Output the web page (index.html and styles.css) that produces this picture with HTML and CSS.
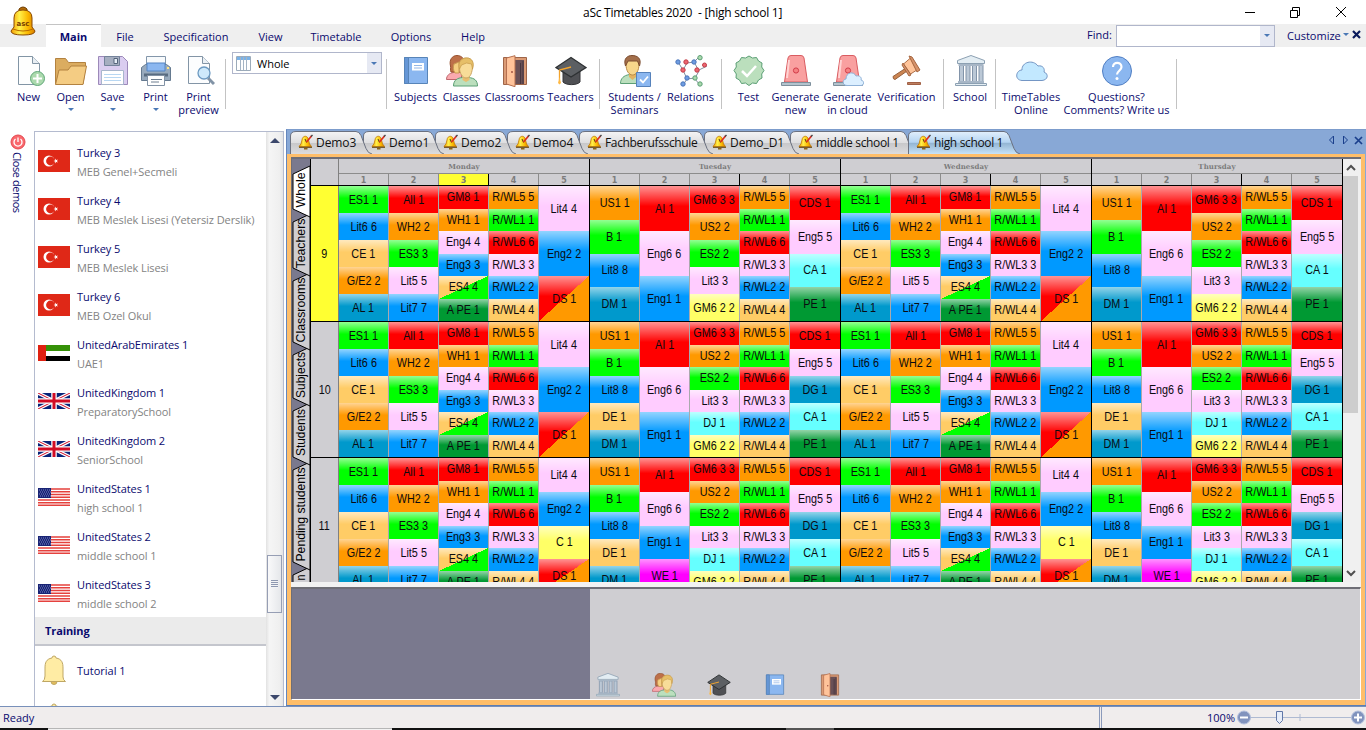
FILE: index.html
```html
<!DOCTYPE html>
<html lang="en">
<head>
<meta charset="utf-8">
<title>aSc Timetables 2020</title>
<link rel="stylesheet" href="styles.css">
</head>
<body>
<svg class="defs" width="0" height="0" aria-hidden="true">
  <defs>
    <linearGradient id="gold" x1="0" x2="1" y1="0" y2="0"><stop offset="0" stop-color="#f49a00"/><stop offset=".35" stop-color="#fff04a"/><stop offset=".7" stop-color="#fbb800"/><stop offset="1" stop-color="#d87c00"/></linearGradient>
    <linearGradient id="tabgray" x1="0" x2="0" y1="0" y2="1"><stop offset="0" stop-color="#f4f4f5"/><stop offset=".5" stop-color="#dedee0"/><stop offset=".52" stop-color="#c8c8ca"/><stop offset="1" stop-color="#dcdcde"/></linearGradient>
    <linearGradient id="tabblue" x1="0" x2="0" y1="0" y2="1"><stop offset="0" stop-color="#e2effc"/><stop offset=".48" stop-color="#b4d4f2"/><stop offset=".52" stop-color="#93b5d3"/><stop offset="1" stop-color="#c6e2f8"/></linearGradient>
  </defs>
  <symbol id="new" viewBox="0 0 32 32"><path d="M5.500 1.500h14l7 7v21h-21z" fill="#fdfefe" stroke="#8295a5"/><path d="M19.500 1.500v7h7" fill="#e8eef3" stroke="#8295a5"/><circle cx="24.500" cy="23.500" r="7" fill="#abd9ad" stroke="#5fa777"/><path d="M24.500 19v9M20 23.500h9" stroke="#fff" stroke-width="2"/></symbol>
  <symbol id="open" viewBox="0 0 32 32"><path d="M.500 29V3.500h10l3 4h17V12L28 29z" fill="#dbac60" stroke="#b38240"/><path d="M.500 29.500 4 15h9l3-4h15.500L28 29.500z" fill="#f4cc83" stroke="#b38240"/></symbol>
  <symbol id="save" viewBox="0 0 32 32"><path d="M1.500 1.500h24l5 5v23h-29z" fill="#dacdf0" stroke="#9c89b9"/><path d="M7.500 1.500h15v9h-15z" fill="#a5aec0" stroke="#74839b"/><path d="M17 3.500h3.500v5H17z" fill="#e6eef7" stroke="#55657b"/><path d="M4.500 15.500h22v14h-22z" fill="#fff" stroke="#a8b6cc"/><path d="M7 19.500h17M7 22.500h17M7 25.500h17" stroke="#b8d7f2"/></symbol>
  <symbol id="print" viewBox="0 0 32 32"><path d="M6.500 1.500h19v10h-19z" fill="#f7fafc" stroke="#8396aa"/><path d="M1.500 12.500l4-3h21l4 3v13h-29z" fill="#98aabd" stroke="#657a90"/><path d="M7 8h18v8H7z" fill="#8bb7f0" stroke="#5585c4"/><path d="M4 18.500h24v3H4z" fill="#596c81"/><path d="M7.500 20.500h17v10h-17z" fill="#fff" stroke="#8292a5"/><path d="M11 24.500h11M11 27h8" stroke="#6f7f90"/><path d="M27 13h2" stroke="#ffe485" stroke-width="2"/></symbol>
  <symbol id="preview" viewBox="0 0 32 32"><path d="M5.500 1.500h14l7 7v20h-21z" fill="#fcfdfe" stroke="#8395a6"/><path d="M19.500 1.500v7h7" fill="#eaf0f5" stroke="#8395a6"/><path d="m25 23 6 6" stroke="#8193a6" stroke-width="3"/><circle cx="21" cy="18" r="6" fill="#cee9fb" stroke="#6c99c1" stroke-width="1.300"/></symbol>
  <symbol id="subjects" viewBox="0 0 32 32"><path d="M4.500 2.500h23v26h-23z" fill="#8bb7f0" stroke="#5784b8"/><path d="M4.500 2.500h4v26h-4z" fill="#6596d6" stroke="#5784b8"/><path d="M12 8h12v7.500H12z" fill="#fff"/><path d="M14 10.500h8M14 13h8" stroke="#94b7e6"/></symbol>
  <symbol id="classes" viewBox="0 0 32 32"><path d="M.500 24.500c0-4 3-6.500 7-7h8v7z" fill="#faa9ae" stroke="#bd666d"/><path d="M5 17c-1-2 0-4-.5-6C3 5 6 .500 11 .500s8 4 8 9c0 4-2 6-5 7.500z" fill="#bd7049" stroke="#98502e"/><path d="M8 9l5-2v11H9c-2-3-2-6-1-9" fill="#f6cf81" stroke="#c99a52"/><path d="M7.500 31c0-6 4-8 9-8.500h6c6 .5 9 3 9 8.500z" fill="#bbdfbd" stroke="#5b9f75"/><path d="M16.500 20h7v5l-3.500 2-3.500-2z" fill="#e8bd70"/><path d="M13.500 10c0-5 3-7 7-7 6 0 7 5 6 10-1 7-3 10-6.500 10s-6.500-5-6.500-10z" fill="#f8dc98" stroke="#cba461"/><path d="M13.500 14c-2-7 2-11 7-11 6 0 8 5 6 11l-1-5-5-1-5 2z" fill="#e6bf68" stroke="#c69949" stroke-width=".7"/></symbol>
  <symbol id="classrooms" viewBox="0 0 32 32"><path d="M4.500 2.500h23v27h-23z" fill="#db9b75" stroke="#9f6548"/><path d="M15 5h10v24H15z" fill="#695056"/><path d="M21.500 8v21M24 6v23" stroke="#49373e"/><path d="M7.500 3 16 .700v31L7.500 29z" fill="#ffc39a" stroke="#b67050"/><circle cx="13" cy="17" r=".9" fill="#9a4a3a"/></symbol>
  <symbol id="teachers" viewBox="0 0 32 32"><path d="M8 16v11c3 3.500 14 3.500 17 0V16l-9 5z" fill="#4f5054" stroke="#343538"/><path d="m1 12.500 15-10 15 10-15 9.500z" fill="#5c5f63" stroke="#2e3133" stroke-width="1.300"/><path d="M16 12 4.500 15v10" fill="none" stroke="#f2a32d" stroke-width="1.300"/><path d="M4.500 22 3 28l1.500 1.500L6 28z" fill="#ffb944"/></symbol>
  <symbol id="students" viewBox="0 0 32 32"><path d="M1.500 28.500c0-5 3-8 9-9h5c7 1 9 4 9 9z" fill="#bbdfbd" stroke="#5b9f75"/><path d="M10 16h7v6l-3.500 3L10 22z" fill="#e3b361"/><path d="M7 9c0-9 13-9 13 0 0 7-3 11-6.500 11S7 16 7 9z" fill="#f7d68b" stroke="#b98b48"/><path d="M6.500 11C4 3 9 .500 13 .500c5 0 10 2.500 7.500 10.500l-2-5H9z" fill="#a36f4b" stroke="#7c4d30"/><path d="M17.500 17.500h14v14h-14z" fill="#8bb7f0" stroke="#5682bb"/><path d="m21 24.500 3 3 5-6" fill="none" stroke="#fff" stroke-width="1.800"/></symbol>
  <symbol id="relations" viewBox="0 0 32 32"><path d="m3 7 5 8 4-7 7-1 5 9-4 7-8 1-4-9M19 7l5-5M24 15l8-4M12 24l-4 6M20 24l5 6" fill="none" stroke="#83909e"/><g fill="#6e9ce0" stroke="#4b75bb"><circle cx="3" cy="7" r="2.200"/><circle cx="19" cy="7" r="2.200"/><circle cx="12" cy="23" r="2.200"/><circle cx="8" cy="29" r="2.200"/></g><g fill="#ec6670" stroke="#c33d49"><circle cx="8" cy="15" r="2.200"/><circle cx="11" cy="7" r="2.200"/><circle cx="22" cy="15" r="2.200"/><circle cx="29.500" cy="10" r="2"/></g><g fill="#abd9ad" stroke="#5b9f75"><circle cx="25" cy="2.700" r="2.200"/><circle cx="20" cy="23" r="2.200"/><circle cx="25" cy="29" r="2.200"/></g></symbol>
  <symbol id="test" viewBox="0 0 32 32"><path d="m16 1 3.500 2 4-.5 2 3.500 3.500 2-.3 4L31 15.500l-2.300 3.500.3 4-3.500 2-2 3.500-4-.5L16 30.500 12.500 28l-4 .5-2-3.500L3 23l.3-4L1 15.500 3.300 12 3 8l3.500-2 2-3.500 4 .5z" fill="#bbdfbd" stroke="#5b9f75"/><path d="m9 16 5 5 9-10" fill="none" stroke="#fff" stroke-width="2.500"/></symbol>
  <symbol id="siren" viewBox="0 0 32 32"><path d="M4.500 27 8 3q.5-2.500 3-2.500h10q2.500 0 3 2.500l3.500 24z" fill="#f9a0a0" stroke="#d95c61"/><path d="m9 5-2 18" stroke="#ffd3d3" stroke-width="2"/><path d="M1.500 27.500h29v3h-29z" fill="#b3c3cd" stroke="#7e909d"/><circle cx="16" cy="15.500" r="2.600" fill="#f58182" stroke="#d13c49"/></symbol>
  <symbol id="cloud" viewBox="0 0 32 32"><path d="M6 25.500C-2 25 0 15 6 15c-.5-8 11-11 16-4 5-1 7 3 6 6 5 2 4 8-2 8.500z" fill="#c2e8ff" stroke="#7496c4"/></symbol>
  <symbol id="sirencloud" viewBox="0 0 32 32"><use href="#siren"/><path d="M15 30.500c-5 0-5-6-1-6.500 0-7 8-8 10-3 4-1 6 2 5 4 4 1 3 5.500 0 5.500z" fill="#dcefff" stroke="#8fb1d7"/></symbol>
  <symbol id="verify" viewBox="0 0 32 32"><path d="m15 13 2.500 2L4 24.500q-2 0-2-3z" fill="#cc8552" stroke="#96603c"/><path d="m12.500 9 7-6 8 11-8 5z" fill="#ffc49a" stroke="#ae6f48"/><path d="m18 1 3 1 8 13-3 2zM12 8l8 12-2 1L11 10z" fill="#d6926a" stroke="#a5653f"/><path d="M16.500 27.500h13v2h-13z" fill="#bd7e5f" stroke="#a16045"/></symbol>
  <symbol id="school" viewBox="0 0 32 32"><path d="M2.500 8.500v-3L16 .500l13.500 5v3z" fill="#e3edf3" stroke="#8ca0b2"/><path d="M4.500 10.500h4v16h-4zM11 10.500h4v16h-4zM17.500 10.500h4v16h-4zM24 10.500h4v16h-4z" fill="#bbc8d6" stroke="#8294a9"/><path d="M3.500 9h25v2h-25zM3 26h26v2H3z" fill="#a7b6c6"/><path d="M.500 28.500h31v2H.500z" fill="#e3edf3" stroke="#8ca0b2"/></symbol>
  <symbol id="question" viewBox="0 0 32 32"><circle cx="16" cy="16" r="14.500" fill="#8bb7f0" stroke="#517fc3"/><path d="M12 12c0-5.500 8.500-5.500 8.500 0 0 3.500-4.500 4-4.500 7.500" fill="none" stroke="#fff" stroke-width="2.200"/><circle cx="16" cy="23.500" r="1.500" fill="#fff"/></symbol>
  <symbol id="tabbell" viewBox="0 0 16 16"><path d="M1 12.500q2.500-2 3-6.500C4.500 1 10 1 10.500 6q.5 4.500 3 6.500z" fill="url(#gold)" stroke="#c27a00" stroke-width=".8"/><path d="M1 13.300h13" stroke="#5e3f0c"/><path d="M6 14h3.500v1.500H6z" fill="#8b6417"/><path d="m7 5 1.500 3.500" stroke="#5a3a12"/><path d="m8.500 8 5-6" stroke="#dc2d20" stroke-width="1.700"/><path d="m13 2.500 1.500-1.500" stroke="#444" stroke-width="1.500"/></symbol>
  <symbol id="bell" viewBox="0 0 24 30"><path d="M10 3q0-2 2-2t2 2c6 1 7 5 7 10v9q0 3 2.500 4.500H.500Q3 25 3 21v-8C3 8 4 4 10 3z" fill="#ffeca4" stroke="#bfa764"/><path d="M9 26.500h6q0 3-3 3t-3-3z" fill="#e2bc5b" stroke="#bfa764"/></symbol>
  <symbol id="tr" viewBox="0 0 32 22"><path d="M0 0h32v22H0z" fill="#df2817"/><circle cx="11" cy="11" r="5.500" fill="#fff"/><circle cx="12.500" cy="11" r="4.400" fill="#df2817"/><path d="m15.500 11 4.500-1.500-2.800 3.900V8.600L20 12.500z" fill="#fff"/></symbol>
  <symbol id="ae" viewBox="0 0 32 16"><path d="M8 0h24v6H8z" fill="#359107"/><path d="M8 6h24v5H8z" fill="#fff"/><path d="M8 11h24v5H8z"/><path d="M0 0h8v16H0z" fill="#df2111"/></symbol>
  <symbol id="gb" viewBox="0 0 32 16"><path d="M0 0h32v16H0z" fill="#082378"/><path d="m0 0 32 16M32 0 0 16" stroke="#fff" stroke-width="3.500"/><path d="m0 0 32 16M32 0 0 16" stroke="#d10c25"/><path d="M16 0v16M0 8h32" stroke="#fff" stroke-width="5.500"/><path d="M16 0v16M0 8h32" stroke="#d10c25" stroke-width="3"/></symbol>
  <symbol id="us" viewBox="0 0 32 18"><path d="M0 0h32v18H0z" fill="#fff"/><path d="M0 1h32M0 3.800h32M0 6.500h32M0 9.300h32M0 12h32M0 14.700h32M0 17.300h32" stroke="#e5413d" stroke-width="1.400"/><path d="M0 0h13v10H0z" fill="#192475"/><path d="M1 2h11M2 4h11M1 6h11M2 8h11" stroke="#98a3dc" stroke-width=".8" stroke-dasharray="1 1"/></symbol>
</svg>

<header class="title">
  <span class="title-text">aSc Timetables 2020&nbsp; - [high school 1]</span>
  <svg class="winbtns" viewBox="0 0 102 12" width="102" height="12"><path d="M0 6.500h10M45.500 4.500h7v7h-7zM47.500 4.500v-3h7v8h-2M91 1l10 10M101 1 91 11" fill="none" stroke="#000"/></svg>
</header>

<nav class="menu">
  <svg class="logo" viewBox="0 0 26 31" width="26" height="31"><path d="M9 3q4-4 8 0v4H9z" fill="#b26b08" stroke="#6e3c00"/><path d="M4 21V12q0-8 9-8t9 8v9l3 4q0 4-12 4T1 25z" fill="url(#gold)" stroke="#8a4a00"/><path d="M3 23q10 4 20 0" fill="none" stroke="#b86b00"/><text x="13" y="20" text-anchor="middle" class="logo-text">asc</text></svg>
  <span class="m active">Main</span><span class="m m-file">File</span><span class="m m-spec">Specification</span><span class="m m-view">View</span><span class="m m-time">Timetable</span><span class="m m-opt">Options</span><span class="m m-help">Help</span>
  <span class="find">Find:</span>
  <span class="findbox"><i class="drop"><b class="arr"></b></i></span>
  <span class="customize">Customize</span><b class="arr"></b>
  <svg class="menu-x" width="9" height="9"><path d="m1 1 7 7M8 1 1 8" stroke="#0a1a5c" stroke-width="2.200"/></svg>
</nav>

<section class="toolbar" id="toolbar"></section>

<main class="work">
  <aside class="rail">
    <svg width="16" height="16" viewBox="0 0 16 16"><circle cx="8" cy="8" r="7" fill="#f9686d" stroke="#e4474e"/><path d="M5.500 5a4 4 0 1 0 5 0M8 3.500V8" fill="none" stroke="#fff" stroke-width="1.300"/></svg>
    <span class="close-demos">Close demos</span>
  </aside>
  <section class="demos">
    <div class="list" id="list"></div>
    <div class="scroll"><b class="up"></b><span class="thumb"></span><b class="down"></b></div>
  </section>
  <section class="mdi">
    <div class="tabs" id="tabs"></div>
    <div class="frame">
      <div class="board">
        <svg class="side" width="18" height="423" id="side"></svg>
        <div class="grid" id="grid"></div>
        <div class="vscroll"><svg width="15" height="423"><path d="M0 17h15v237H0z" fill="#cdcdcd"/><path d="m4 11 4-4 4 4M4 412l4 4 4-4" fill="none" stroke="#505050" stroke-width="2"/></svg></div>
      </div>
      <div class="pane"><div class="pane-left"></div><div class="pane-icons" id="paneicons"></div></div>
    </div>
  </section>
</main>

<footer class="status">
  <span class="ready">Ready</span>
  <div class="zoom"><span class="pct">100%</span>
    <svg width="128" height="20" viewBox="0 0 128 20"><path d="M13 9.500h101M63 6v7" stroke="#aebad2"/><circle cx="7" cy="9.500" r="6.500" fill="#8193bd" stroke="#b2bfdc"/><path d="M3 9.500h8" stroke="#fff" stroke-width="2"/><circle cx="121" cy="9.500" r="6.500" fill="#8193bd" stroke="#b2bfdc"/><path d="M117 9.500h8M121 5.500v8" stroke="#fff" stroke-width="2"/><path d="M39.500 3.500h6v9l-3 3-3-3z" fill="#e7edf8" stroke="#6077a8"/></svg>
  </div>
</footer>
<div class="taskbar"><i></i><b></b></div>
<script src="app.js"></script>
</body>
</html>
```

FILE: styles.css
```css
* { box-sizing: border-box; }
html, body { margin: 0; }
body {
  width: 1366px; height: 730px; overflow: hidden; background: #fff;
  display: flex; flex-direction: column;
  font: 11px/13px "Open Sans", "Noto Sans", sans-serif; color: #0a0a6e;
}
.defs { position: absolute; }
svg { display: block; flex: none; }

.title { height: 24px; display: flex; align-items: center; color: #000; font-size: 12px; flex: none; }
.title-text { margin-left: 583px; width: 200px; white-space: pre; letter-spacing: -.25px; }
.winbtns { margin-left: 462px; margin-top: -1px; }

.menu { height: 23px; background: #efefef; display: flex; align-items: center; flex: none; }
.logo { width: 26px; margin: -21px 10px 0 10px; position: relative; top: -4px; }
.logo-text { font: bold 7px "DejaVu Sans", sans-serif; fill: #7a3d00; }
.m { height: 23px; line-height: 26px; text-align: center; flex: none; }
.active { width: 55px; background: #fff; border-top: 1px solid #c4c4c4; font-weight: 700; line-height: 24px; }
.m-file { width: 48px; }
.m-spec { width: 94px; }
.m-view { width: 55px; }
.m-time { width: 76px; }
.m-opt { width: 74px; }
.m-help { width: 50px; }
.find { margin: -2px 0 0 589px; width: 29px; }
.findbox { width: 159px; height: 22px; border: 1px solid #b0b6cb; background: #fff; display: flex; justify-content: flex-end; }
.drop { width: 14px; background: #e6e9f3; display: flex; align-items: center; justify-content: center; }
.arr { width: 0; height: 0; border: 3px solid transparent; border-top-color: #4a78b5; border-bottom: 0; flex: none; }
.customize { margin: 0 3px 0 12px; width: 53px; white-space: nowrap; }
.menu .customize + .arr { margin-top: -2px; }
.menu-x { margin: -2px 0 0 3px; }

.toolbar { height: 82px; display: flex; padding: 5px 0 0 7px; flex: none; }
.tool { display: flex; flex-direction: column; align-items: center; padding: 3px 0 0 1px; flex: none; text-align: center; }
.tool svg { margin-left: 1px; }
.tool span { white-space: pre; margin-top: 3px; }
.tool .arr { margin-top: 5px; }
.sep { height: 50px; margin-top: 7px; display: flex; justify-content: center; flex: none; }
.sep::before { content: ""; width: 1px; background: #c3c3c3; }
.combo { width: 150px; height: 22px; border: 1px solid #b0b6cb; display: flex; align-items: center; color: #000; flex: none; line-height: 11px; }
.combo svg { margin: 0 6px 0 3px; }
.combo .drop { margin-left: auto; height: 20px; }

.work { height: 577px; display: flex; flex: none; }
.rail { width: 34px; padding: 5px 0 0 10px; flex: none; }
.close-demos { writing-mode: vertical-rl; width: 14px; line-height: 14px; margin-top: 2px; letter-spacing: -.45px; }
.demos { width: 250px; margin-top: 2px; border: 1px solid #b4bbcf; border-bottom: 0; display: flex; overflow: hidden; flex: none; }
.list { width: 231px; padding-top: 5px; height: 574px; overflow: hidden; }
.item { height: 48px; display: flex; align-items: center; padding-left: 3px; }
.pic { width: 32px; display: flex; justify-content: center; margin-right: 7px; flex: none; }
.names { padding-top: 2px; letter-spacing: -.08px; }
.name { display: block; line-height: 19px; white-space: nowrap; }
.sub { color: #838383; }
.group { height: 29px; line-height: 28px; background: #ebebeb; border-bottom: 2px solid #c4c6cd; font-weight: 700; padding-left: 10px; letter-spacing: -.1px; }
.scroll { width: 17px; background: linear-gradient(90deg, #e2e2e2, #f5f5f5 20%, #efefef 80%, #e4e4e4); display: flex; flex-direction: column; align-items: center; padding: 6px 0; }
.up, .down { width: 0; height: 0; border: 5px solid transparent; }
.up { border-bottom-color: #3c486c; border-top: 0; }
.down { border-top-color: #3c486c; border-bottom: 0; margin-top: 82px; }
.thumb { margin-top: 412px; width: 15px; height: 58px; flex: none; border: 1px solid #969eb4; background: repeating-linear-gradient(#8e98b0 0 1px, #f2f3f5 1px 2px) center / 7px 8px no-repeat, linear-gradient(90deg, #f9f9fa, #e5e7ea); }

.mdi { margin-left: 2px; width: 1080px; background: #88a8d6; display: flex; flex-direction: column; border-bottom: 1px solid #5c7eb3; }
.tabs { height: 25px; padding: 0 0 0 3px; display: flex; border-top: 1px solid #7c9ccc; border-left: 1px solid #6486bd; flex: none; }
.tab { height: 24px; display: flex; align-items: center; font-size: 12px; letter-spacing: -.08px; color: #111; position: relative; isolation: isolate; flex: none; white-space: nowrap; }
.tab .shape { position: absolute; left: 0; top: 0; z-index: -1; }
.tab .ico { margin: 0 2px 0 8px; }
.tight { letter-spacing: -.35px; }
.tabnav { margin: 5px 3px 0 auto; }
.frame { flex: 1; margin-right: 1px; padding: 3px 4px 5px 4px; border-left: 1px solid #6486bd; background: #ffbe69; display: flex; flex-direction: column; }
.board { height: 425px; border: 1px solid #6e6e76; border-width: 2px 0 0 1px; display: flex; background: #f0f0f0; overflow: hidden; flex: none; }
.side text { font: 12px "Liberation Sans", sans-serif; fill: #000; }
.grid { width: 1033px; background: #cfced2; overflow: hidden; font: 12px/14px "Liberation Sans", sans-serif; color: #0b0b10; flex: none; }
.vscroll { width: 16px; background: #f0f0f0; }
.head { display: flex; height: 27px; border-bottom: 1px solid #000; }
.corner { width: 29px; border-right: 1px solid #808080; border-left: 1px solid #000; flex: none; }
.dayhead { width: 251px; border-right: 1px solid #000; color: #7c7c7c; text-align: center; font: 900 7px/16px "DejaVu Serif", serif; letter-spacing: .1px; flex: none; }
.dayname { height: 14px; }
.periods { display: flex; border-top: 1px solid #8c8c8c; height: 12px; font: bold 8px/13px "DejaVu Sans", sans-serif; }
.periods span { width: 50px; border-right: 1px solid #8c8c8c; }
.periods span:nth-child(3) { border-right: 1px solid #000; }
.periods span:last-child { border-right: 0; }
.periods .now { background: #ffff32; }
.line { height: 136px; display: flex; border-bottom: 1px solid #000; }
.class { width: 29px; border-right: 1px solid #808080; border-left: 1px solid #000; display: flex; align-items: center; justify-content: center; flex: none; }
.class b, .cell b { font-weight: 400; transform: scaleX(.9); white-space: nowrap; }
.class.now { background: #ffff32; }
.day { width: 251px; display: flex; border-right: 1px solid #000; flex: none; }
.col { width: 50px; border-right: 1px solid #a9a9ad; display: flex; flex-direction: column; }
.col:last-child { border-right: 0; }
.cell { flex: 1 1 0; min-height: 0; display: flex; align-items: center; justify-content: center; --fade: linear-gradient(rgba(255,255,255,.58), rgba(255,255,255,0) 45%); background-image: var(--fade); }
.g { background-color: #0f0; } .r { background-color: #f00; } .o { background-color: #f90; }
.b { background-color: #09f; } .l { background-color: #fcf; } .t { background-color: #fc6; }
.s { background-color: #09c; } .d { background-color: #093; } .y { background-color: #ff6; }
.c { background-color: #6ff; } .m2 { background-color: #f0f; }
.tg { background-color: #fc6; background-image: linear-gradient(to bottom right, transparent 50%, #0f0 50%), var(--fade); }
.ro { background-color: #f00; background-image: linear-gradient(to bottom right, transparent 50%, #f90 50%), var(--fade); }
.pane { margin-top: 5px; flex: 1; border: 1px solid #fff; border-top: 2px solid #6e6e76; border-left: 1px solid #6e6e76; background: #cfced2; display: flex; box-shadow: 0 -5px #f2f2f2; }
.pane-left { width: 298px; background: #7a798e; }
.pane-icons { display: flex; align-items: flex-end; padding: 0 0 2px 6px; gap: 31.500px; }

.status { height: 22px; background: #f0eded; border-top: 1px solid #7890ba; display: flex; align-items: center; flex: none; }
.ready { padding-left: 3px; width: 1099px; }
.zoom { width: 267px; height: 21px; border-left: 3px double #8b9abb; display: flex; align-items: center; }
.pct { width: 135px; padding-right: 2px; text-align: right; }
.taskbar { height: 2px; display: flex; background: #111; flex: none; }
.taskbar i { margin-left: 48px; width: 344px; background: #f2f2f2; border-top: 1px solid #b6b6b6; }
.taskbar b { margin-left: 394px; width: 48px; background: #555; }
```

FILE: app.js
```js
const icon = (id, w, h = w, cls = '') =>
  `<svg class="${cls}" width="${w}" height="${h}"><use href="#${id}"/></svg>`;

// Toolbar: [icon, label, width, has dropdown]; a number is a separator of that width.
const tools = [
  ['new', 'New', 42], ['open', 'Open', 42, 1], ['save', 'Save', 42, 1], ['print', 'Print', 44, 1],
  ['preview', 'Print\npreview', 42], 13, 'combo', 9,
  ['subjects', 'Subjects', 48], ['classes', 'Classes', 44], ['classrooms', 'Classrooms', 62], ['teachers', 'Teachers', 50], 9,
  ['students', 'Students /\nSeminars', 60], ['relations', 'Relations', 52], 10,
  ['test', 'Test', 44], ['siren', 'Generate\nnew', 50], ['sirencloud', 'Generate\nin cloud', 54], ['verify', 'Verification', 64], 10,
  ['school', 'School', 43], 9,
  ['cloud', 'TimeTables\nOnline', 61], ['question', 'Questions?\nComments? Write us', 110], 10
];
document.getElementById('toolbar').innerHTML = tools.map(t => {
  if (t === 'combo') {
    return `<div class="combo"><svg width="15" height="15"><path d="M.5.5h14v14H.5z" fill="#fff" stroke="#9cabba"/><path d="M1 1h13v3H1z" fill="#79b2e8"/><path d="M4.500 1v13M7.500 1v13M10.500 1v13" stroke="#a4b4c4"/></svg>Whole<i class="drop"><b class="arr"></b></i></div>`;
  }
  if (typeof t === 'number') return `<div class="sep" style="width:${t}px"></div>`;
  return `<div class="tool" style="width:${t[2]}px">${icon(t[0], 32)}<span>${t[1]}</span>${t[3] ? '<b class="arr"></b>' : ''}</div>`;
}).join('');

// Demo list: [flag, height, title, subtitle]
const demos = [
  ['tr', 22, 'Turkey 3', 'MEB Genel+Secmeli'], ['tr', 22, 'Turkey 4', 'MEB Meslek Lisesi (Yetersiz Derslik)'],
  ['tr', 22, 'Turkey 5', 'MEB Meslek Lisesi'], ['tr', 22, 'Turkey 6', 'MEB Ozel Okul'],
  ['ae', 16, 'UnitedArabEmirates 1', 'UAE1'], ['gb', 16, 'UnitedKingdom 1', 'PreparatorySchool'],
  ['gb', 16, 'UnitedKingdom 2', 'SeniorSchool'], ['us', 18, 'UnitedStates 1', 'high school 1'],
  ['us', 18, 'UnitedStates 2', 'middle school 1'], ['us', 18, 'UnitedStates 3', 'middle school 2']
];
document.getElementById('list').innerHTML = demos.map(([f, h, a, b]) =>
  `<div class="item"><span class="pic">${icon(f, 32, h)}</span><span class="names"><span class="name">${a}</span><span class="name sub">${b}</span></span></div>`
).join('') + '<div class="group">Training</div>' +
  `<div class="item"><span class="pic">${icon('bell', 24, 30)}</span>Tutorial 1</div>` +
  `<div class="item"><span class="pic">${icon('bell', 24, 30)}</span></div>`;

// Document tabs: [label, width]
const tabs = [['Demo3', 73], ['Demo1', 72], ['Demo2', 72], ['Demo4', 72], ['Fachberufsschule', 125], ['Demo_D1', 86], ['middle school 1', 118], ['high school 1', 103]];
document.getElementById('tabs').innerHTML = tabs.map(([label, w], i) => {
  const on = i === 7, x = w - 3;
  const d = `M.5 24V6Q.5 1.500 6 1.500H${x - 4}q3 0 5 4l5 13q2 5 6 5.500`;
  return `<div class="tab${label.length > 8 ? ' tight' : ''}" style="width:${w}px;z-index:${on ? 20 : 10 - i}"><svg class="shape" width="${w + 12}" height="24"><path d="${d}" fill="url(#${on ? 'tabblue' : 'tabgray'})" stroke="#6b7180"/></svg>${icon('tabbell', 16, 16, 'ico')}${label}</div>`;
}).join('') + '<svg class="tabnav" width="36" height="11"><path d="M6.500 1v8l-4-4zM16.500 1v8l4-4z" fill="none" stroke="#1a3f8c"/><path d="m28 2 7 7M35 2l-7 7" stroke="#1a3f8c" stroke-width="1.700"/></svg>';

// Vertical view tabs: [label, top, bottom, text length]
const views = [['Whole', 8, 56, 35], ['Teachers', 56, 115, 50], ['Classrooms', 115, 189, 65], ['Subjects', 189, 245, 46], ['Students', 245, 304, 47], ['Pending students', 304, 409, 94], ['n', 409, 430, 6]];
document.getElementById('side').innerHTML = '<path d="M0 0h18v423H0z" fill="#7a798e"/>' + views.slice().reverse().map(([s, a, b, len]) => {
  const fill = s === 'Whole' ? '#fff' : '#cfced2';
  return `<path d="M18 ${a - 1} 1 ${a + 7}V${b - 6}L18 ${b + 2}z" fill="${fill}" stroke="#000"/><text transform="translate(13 ${(a + b) / 2 - 1}) rotate(-90)" text-anchor="middle" textLength="${len}" lengthAdjust="spacingAndGlyphs">${s}</text>`;
}).join('');

// Timetable columns: "colour:label" cells, listed top to bottom.
const mon = ['g:ES1 1|b:Lit6 6|t:CE 1|o:G/E2 2|s:AL 1', 'r:All 1|o:WH2 2|g:ES3 3|l:Lit5 5|b:Lit7 7',
  'r:GM8 1|o:WH1 1|l:Eng4 4|b:Eng3 3|tg:ES4 4|d:A PE 1', 'o:R/WL5 5|g:R/WL1 1|r:R/WL6 6|l:R/WL3 3|b:R/WL2 2|t:R/WL4 4'];
const rows = [
  { n: 9, a: [...mon, 'l:Lit4 4|b:Eng2 2|ro:DS 1'], b: ['o:US1 1|g:B 1|b:Lit8 8|s:DM 1', 'r:AI 1|l:Eng6 6|b:Eng1 1', 'r:GM6 3 3|o:US2 2|g:ES2 2|l:Lit3 3|y:GM6 2 2', mon[3], 'r:CDS 1|l:Eng5 5|c:CA 1|d:PE 1'] },
  { n: 10, a: [...mon, 'l:Lit4 4|b:Eng2 2|ro:DS 1'], b: ['o:US1 1|g:B 1|b:Lit8 8|t:DE 1|s:DM 1', 'r:AI 1|l:Eng6 6|b:Eng1 1', 'r:GM6 3 3|o:US2 2|g:ES2 2|l:Lit3 3|c:DJ 1|y:GM6 2 2', mon[3], 'r:CDS 1|l:Eng5 5|s:DG 1|c:CA 1|d:PE 1'] },
  { n: 11, a: [...mon, 'l:Lit4 4|b:Eng2 2|y:C 1|ro:DS 1'], b: ['o:US1 1|g:B 1|b:Lit8 8|t:DE 1|s:DM 1', 'r:AI 1|l:Eng6 6|b:Eng1 1|m2:WE 1', 'r:GM6 3 3|o:US2 2|g:ES2 2|l:Lit3 3|c:DJ 1|y:GM6 2 2', mon[3], 'r:CDS 1|l:Eng5 5|s:DG 1|c:CA 1|d:PE 1'] }
];
const day = cols => '<div class="day">' + cols.map(c => '<div class="col">' + c.split('|').map(x => {
  const [k, s] = x.split(':');
  return `<div class="cell ${k}"><b>${s}</b></div>`;
}).join('') + '</div>').join('') + '</div>';
document.getElementById('grid').innerHTML = '<div class="head"><div class="corner"></div>' +
  ['Monday', 'Tuesday', 'Wednesday', 'Thursday'].map((d, i) =>
    `<div class="dayhead"><div class="dayname">${d}</div><div class="periods">${[1, 2, 3, 4, 5].map(p => `<span class="${!i && p === 3 ? 'now' : ''}">${p}</span>`).join('')}</div></div>`).join('') + '</div>' +
  rows.map(r => `<div class="line"><div class="class ${r.n === 9 ? 'now' : ''}"><b>${r.n}</b></div>${day(r.a)}${day(r.b)}${day(r.a)}${day(r.b)}</div>`).join('');

document.getElementById('paneicons').innerHTML = ['school', 'classes', 'teachers', 'subjects', 'classrooms'].map(n => icon(n, 24)).join('');
```
